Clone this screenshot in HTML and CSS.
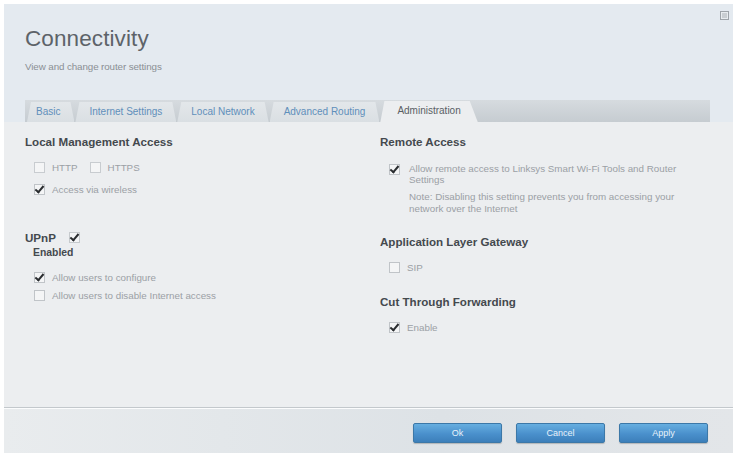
FILE: index.html
```html
<!DOCTYPE html>
<html>
<head>
<meta charset="utf-8">
<link rel="stylesheet" href="styles.css">
</head>
<body>
<div class="window">
  <header class="head">
    <span class="close"></span>
    <h1 class="title">Connectivity</h1>
    <p class="subtitle">View and change router settings</p>
    <nav class="tabs">
      <span class="tab">Basic</span>
      <span class="tab">Internet Settings</span>
      <span class="tab">Local Network</span>
      <span class="tab">Advanced Routing</span>
      <span class="tab active">Administration</span>
    </nav>
  </header>
  <main class="content">
    <section class="col left">
      <h2 class="h">Local Management Access</h2>
      <div class="row r-http">
        <span class="cb dim"></span><span class="lbl">HTTP</span>
        <span class="cb dim sp"></span><span class="lbl">HTTPS</span>
      </div>
      <div class="row r-wl"><span class="cb on"></span><span class="lbl">Access via wireless</span></div>
      <div class="upnp">
        <h2 class="h">UPnP</h2><span class="cb on nobox"></span>
      </div>
      <div class="enabled">Enabled</div>
      <div class="row r-cfg"><span class="cb on"></span><span class="lbl">Allow users to configure</span></div>
      <div class="row r-dis"><span class="cb"></span><span class="lbl">Allow users to disable Internet access</span></div>
    </section>
    <section class="col right">
      <h2 class="h">Remote Access</h2>
      <div class="row top r-ra"><span class="cb on"></span>
        <span class="lbl block">Allow remote access to Linksys Smart Wi-Fi Tools and Router<br>Settings
          <span class="note">Note: Disabling this setting prevents you from accessing your<br>network over the Internet</span>
        </span>
      </div>
      <h2 class="h h-alg">Application Layer Gateway</h2>
      <div class="row r-sip"><span class="cb"></span><span class="lbl">SIP</span></div>
      <h2 class="h h-ctf">Cut Through Forwarding</h2>
      <div class="row r-en"><span class="cb on"></span><span class="lbl">Enable</span></div>
    </section>
  </main>
  <footer class="foot">
    <button class="btn">Ok</button>
    <button class="btn">Cancel</button>
    <button class="btn">Apply</button>
  </footer>
</div>
</body>
</html>
```
FILE: styles.css
```css
html, body { margin: 0; padding: 0; background: #ffffff; }
body { font-family: "Liberation Sans", Arial, sans-serif; width: 737px; height: 456px; overflow: hidden; }
.window { margin: 4px 4px 0 4px; height: 449px; display: flex; flex-direction: column; background: #eceef0; }
.head { position: relative; background: #e4eaf0; padding: 22px 0 0 21px; height: 118px; box-sizing: border-box; display: flex; flex-direction: column; flex: none; }
.close { position: absolute; right: 4px; top: 7px; width: 7px; height: 7px; border: 1px solid #9ea4a9; background: #c9ced2; box-shadow: inset 0 0 0 1px #e8ecef; }
.title { margin: 0; font-weight: normal; font-size: 22.5px; line-height: 26px; color: #5d6369; letter-spacing: 0.1px; }
.subtitle { margin: 10px 0 0 0; font-size: 9.8px; line-height: 10px; color: #8a8f94; letter-spacing: -0.1px; }
.tabs { margin-top: auto; margin-right: 23px; height: 22px; display: flex; align-items: flex-end; background: linear-gradient(#d6dbdf, #c6ccd1); }
.tab { height: 20px; line-height: 20px; font-size: 10px; color: #5f8fbb; background: linear-gradient(#e3e7ea, #dadfe3); padding: 0 14px; clip-path: polygon(4px 0, calc(100% - 4px) 0, 100% 100%, 0 100%); margin-right: 1px; white-space: nowrap; }
.tab:first-child { padding: 0 14px 0 9px; margin-left: 2px; }
.tab.active { background: #eceef0; color: #5a5f64; height: 21px; padding: 0 17px; clip-path: polygon(4px 0, calc(100% - 8px) 0, 100% 100%, 0 100%); }
.content { flex: 1; display: flex; padding: 13px 0 0 21px; }
.col { display: flex; flex-direction: column; }
.left { width: 355px; }
.right { flex: 1; }
.h { margin: 0; font-size: 11.6px; line-height: 13px; font-weight: bold; color: #44494e; }
.row { display: flex; align-items: center; padding-left: 9px; }
.row.top { align-items: flex-start; }
.lbl { font-size: 9.8px; line-height: 11px; color: #9ba0a5; white-space: nowrap; }
.lbl.block { display: block; }
.note { display: block; margin-top: 6px; line-height: 12px; }
.cb { width: 9px; height: 9px; border: 1px solid #c0c4c8; background: #f4f5f6; margin-right: 7px; position: relative; flex: none; }
.cb.dim { border-color: #c8ccd0; }
.cb.sp { margin-left: 12px; }
.cb.on::after { content: ""; position: absolute; left: 2px; top: -1px; width: 3px; height: 7px; border: solid #2a2d30; border-width: 0 2px 2px 0; transform: rotate(40deg); }
.cb.nobox { border-color: #c6cacd; }
.r-http { margin-top: 14px; }
.r-wl { margin-top: 11px; }
.upnp { display: flex; align-items: center; margin-top: 36px; }
.upnp .cb { margin-left: 13px; }
.enabled { margin: 3px 0 0 8px; font-size: 10.4px; font-weight: bold; color: #44494e; line-height: 11px; }
.r-cfg { margin-top: 14px; }
.r-dis { margin-top: 7px; }
.r-ra { margin-top: 15px; }
.r-ra .cb { margin-top: 1px; margin-right: 9px; }
.h-alg { margin-top: 20px; }
.r-sip { margin-top: 14px; }
.h-ctf { margin-top: 22px; }
.r-en { margin-top: 14px; }
.foot { height: 46px; flex: none; border-top: 1px solid #c3c8cc; box-shadow: inset 0 1px 0 #fbfcfd; background: linear-gradient(90deg, #e9ecee, #dde2e6 60%, #e3e6e9); display: flex; justify-content: flex-end; align-items: flex-start; padding: 15px 25px 0 0; box-sizing: border-box; gap: 14px; }
.btn { width: 89px; height: 20px; border: 1px solid #3c78a8; border-radius: 2px; background: linear-gradient(#66aee0, #4a90cc 55%, #3c7fba); color: #e8f2fa; font-family: "Liberation Sans", Arial, sans-serif; font-size: 9px; padding: 0; box-shadow: 0 1px 1px rgba(0,0,0,0.2); }
```
